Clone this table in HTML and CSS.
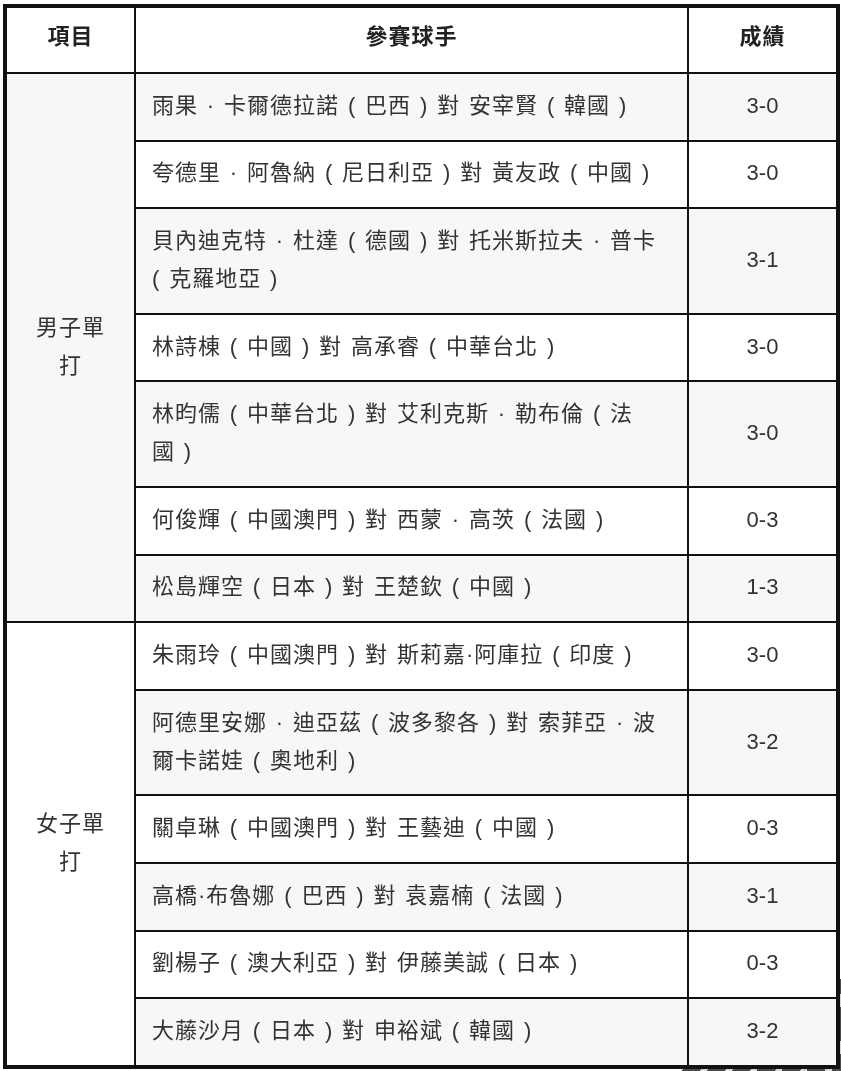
FILE: index.html
```html
<!DOCTYPE html>
<html lang="zh-Hant">
<head>
<meta charset="utf-8">
<link rel="stylesheet" href="styles.css">
</head>
<body>
<table class="results">
  <colgroup>
    <col class="c-event">
    <col class="c-players">
    <col class="c-score">
  </colgroup>
  <thead>
    <tr>
      <th>項目</th>
      <th>參賽球手</th>
      <th>成績</th>
    </tr>
  </thead>
  <tbody>
    <tr class="alt">
      <td class="event" rowspan="7">男子單打</td>
      <td class="players">雨果 · 卡爾德拉諾 ( 巴西 ) 對 安宰賢 ( 韓國 )</td>
      <td class="score">3-0</td>
    </tr>
    <tr>
      <td class="players">夸德里 · 阿魯納 ( 尼日利亞 ) 對 黃友政 ( 中國 )</td>
      <td class="score">3-0</td>
    </tr>
    <tr class="alt">
      <td class="players">貝內迪克特 · 杜達 ( 德國 ) 對 托米斯拉夫 · 普卡<br>( 克羅地亞 )</td>
      <td class="score">3-1</td>
    </tr>
    <tr>
      <td class="players">林詩棟 ( 中國 ) 對 高承睿 ( 中華台北 )</td>
      <td class="score">3-0</td>
    </tr>
    <tr class="alt">
      <td class="players">林昀儒 ( 中華台北 ) 對 艾利克斯 · 勒布倫 ( 法<br>國 )</td>
      <td class="score">3-0</td>
    </tr>
    <tr>
      <td class="players">何俊輝 ( 中國澳門 ) 對 西蒙 · 高茨 ( 法國 )</td>
      <td class="score">0-3</td>
    </tr>
    <tr class="alt">
      <td class="players">松島輝空 ( 日本 ) 對 王楚欽 ( 中國 )</td>
      <td class="score">1-3</td>
    </tr>
    <tr>
      <td class="event" rowspan="6">女子單打</td>
      <td class="players">朱雨玲 ( 中國澳門 ) 對 斯莉嘉·阿庫拉 ( 印度 )</td>
      <td class="score">3-0</td>
    </tr>
    <tr class="alt">
      <td class="players">阿德里安娜 · 迪亞茲 ( 波多黎各 ) 對 索菲亞 · 波<br>爾卡諾娃 ( 奧地利 )</td>
      <td class="score">3-2</td>
    </tr>
    <tr>
      <td class="players">關卓琳 ( 中國澳門 ) 對 王藝迪 ( 中國 )</td>
      <td class="score">0-3</td>
    </tr>
    <tr class="alt">
      <td class="players">高橋·布魯娜 ( 巴西 ) 對 袁嘉楠 ( 法國 )</td>
      <td class="score">3-1</td>
    </tr>
    <tr>
      <td class="players">劉楊子 ( 澳大利亞 ) 對 伊藤美誠 ( 日本 )</td>
      <td class="score">0-3</td>
    </tr>
    <tr class="alt">
      <td class="players">大藤沙月 ( 日本 ) 對 申裕斌 ( 韓國 )</td>
      <td class="score">3-2</td>
    </tr>
  </tbody>
</table>
<div class="corner-deco" aria-hidden="true"></div>
</body>
</html>
```

FILE: styles.css
```css
html, body {
  margin: 0;
  padding: 0;
  background: #ffffff;
}

body {
  padding: 4px 1px 0 3px;
  font-family: "Liberation Sans", "Noto Sans CJK TC", sans-serif;
  color: #333333;
}

.results {
  position: relative;
  z-index: 1;
  width: 837px;
  border-collapse: collapse;
  border: 4px solid #111111;
  font-size: 22px;
  line-height: 38px;
  letter-spacing: 1px;
  word-spacing: 1.75px;
}

.c-event { width: 130px; }
.c-score { width: 150px; }

.results th,
.results td {
  border: 2px solid #111111;
  padding: 12.8px 16px 14.8px;
  vertical-align: middle;
}

.results th {
  padding-top: 10px;
  padding-bottom: 16px;
  font-weight: bold;
  color: #222222;
  text-align: center;
  background: #ffffff;
}

.results tbody tr { background: #ffffff; }
.results tbody tr.alt { background: #f7f7f7; }

.results td.event {
  text-align: center;
  padding-left: 20px;
  padding-right: 20px;
}

.results td.players {
  text-align: left;
}

.results td.score {
  text-align: center;
  letter-spacing: 0;
}

.corner-deco {
  position: fixed;
  right: 0;
  bottom: 0;
  width: 160px;
  height: 92px;
  background: repeating-linear-gradient(118deg, #4a4a4a 0 16px, #d8d8d8 16px 22px);
}
```
